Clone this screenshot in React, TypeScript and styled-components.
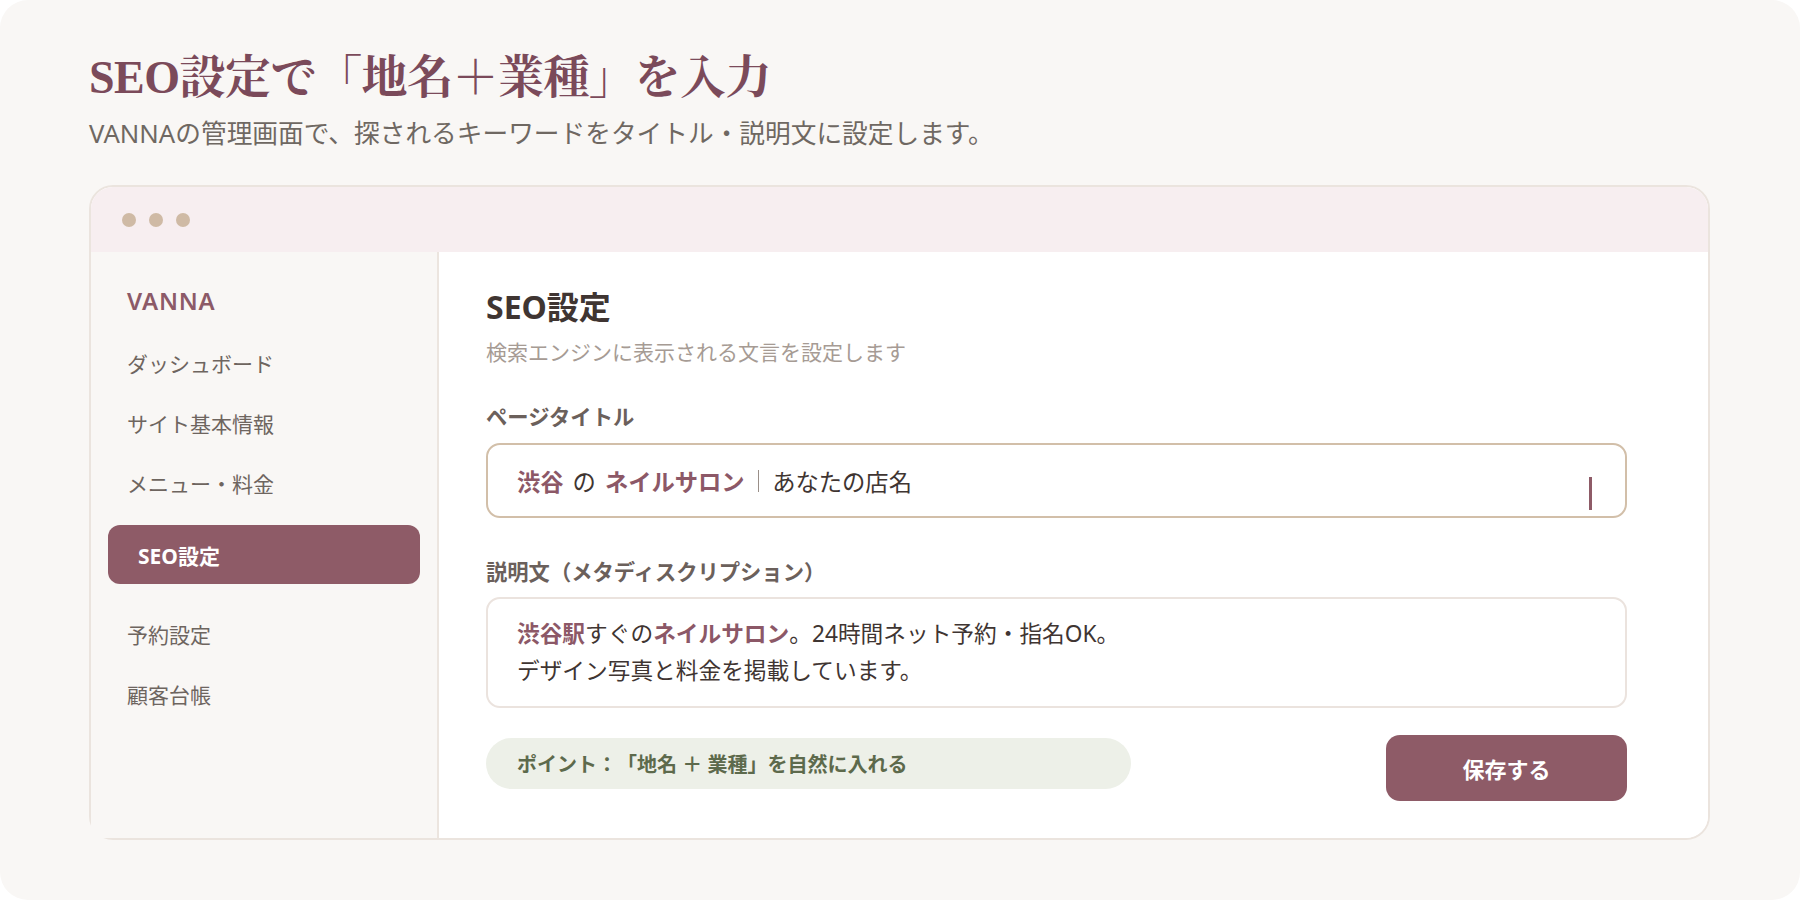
import * as React from 'react';
import styled, {createGlobalStyle} from 'styled-components';

const sans = `"Noto Sans", "Noto Sans CJK JP", sans-serif`;
const accent = '#8e5b67';
const highlight = '#8c5867';

const GlobalStyle = createGlobalStyle`
    html, body {
        margin: 0;
        padding: 0;
        background: #ffffff;
    }
    body {
        font-family: ${sans};
        -webkit-font-smoothing: antialiased;
    }
`;

const Page = styled.div`
    box-sizing: border-box;
    width: 1800px;
    height: 900px;
    background: #f9f7f5;
    border-radius: 28px;
    padding: 50px 90px 0 89px;
    display: flex;
    flex-direction: column;
`;

const Title = styled.h1`
    margin: 0;
    font-family: "Liberation Serif", "Noto Serif CJK JP", "Noto Sans CJK JP", serif;
    font-size: 46px;
    line-height: 56px;
    font-weight: 700;
    color: #7b4a5a;
    letter-spacing: -0.5px;
`;

const Lead = styled.p`
    margin: 10px 0 0;
    font-size: 25.7px;
    line-height: 36px;
    color: #6f6862;
`;

const Window = styled.div`
    box-sizing: border-box;
    margin-top: 33px;
    height: 655px;
    border: 2px solid #ebe4de;
    border-radius: 24px;
    background: #ffffff;
    display: flex;
    flex-direction: column;
`;

const TitleBar = styled.div`
    height: 65px;
    flex: none;
    background: #f7eef0;
    border-radius: 22px 22px 0 0;
    display: flex;
    align-items: center;
    gap: 13px;
    padding-left: 31px;
`;

const Dot = styled.span`
    width: 14px;
    height: 14px;
    border-radius: 50%;
    background: #cfbaa5;
`;

const Body = styled.div`
    flex: 1;
    display: flex;
    min-height: 0;
`;

const Sidebar = styled.nav`
    box-sizing: border-box;
    width: 348px;
    flex: none;
    background: #f9f7f5;
    border-right: 2px solid #ece5df;
    padding: 32px 17px 0;
    display: flex;
    flex-direction: column;
`;

const Brand = styled.div`
    padding-left: 19px;
    font-size: 24px;
    line-height: 34px;
    font-weight: 600;
    letter-spacing: 0.8px;
    color: #8c5a68;
    margin-bottom: 15px;
`;

const NavItem = styled.div<{$active?: boolean}>`
    height: ${p => (p.$active ? '59px' : '60px')};
    display: flex;
    align-items: center;
    padding-left: ${p => (p.$active ? '30px' : '19px')};
    margin: ${p => (p.$active ? '12px 0 20px' : '0')};
    border-radius: 12px;
    font-size: 21px;
    font-weight: ${p => (p.$active ? 700 : 400)};
    color: ${p => (p.$active ? '#ffffff' : '#6e655f')};
    background: ${p => (p.$active ? accent : 'transparent')};
`;

const Main = styled.main`
    flex: 1;
    background: #ffffff;
    border-bottom-right-radius: 22px;
    padding: 35px 81px 0 47px;
    display: flex;
    flex-direction: column;
`;

const Heading = styled.h2`
    margin: 0;
    font-size: 32px;
    line-height: 40px;
    font-weight: 700;
    color: #3f3532;
`;

const SubHeading = styled.p`
    margin: 10px 0 0;
    font-size: 21px;
    line-height: 30px;
    color: #a69b94;
`;

const Label = styled.div<{$gap: number}>`
    margin-top: ${p => p.$gap}px;
    font-size: 21.3px;
    line-height: 30px;
    font-weight: 700;
    color: #6b605b;
`;

const TitleInput = styled.div`
    position: relative;
    box-sizing: border-box;
    margin-top: 11px;
    height: 75px;
    border: 2.5px solid #d2bfa9;
    border-radius: 14px;
    padding: 0 29px;
    display: flex;
    align-items: center;
    font-size: 23.3px;
    color: #3f3532;
`;

const Keyword = styled.span`
    font-weight: 700;
    color: ${highlight};
`;

const Particle = styled.span`
    margin: 0 9px;
`;

const Divider = styled.span`
    display: inline-block;
    width: 1.5px;
    height: 22px;
    margin: 0 13px;
    background: #9a8f88;
`;

const Caret = styled.span`
    position: absolute;
    right: 33px;
    top: 32px;
    width: 3px;
    height: 33px;
    background: ${accent};
`;

const DescInput = styled.div`
    box-sizing: border-box;
    margin-top: 10px;
    height: 111px;
    border: 2px solid #ebe3de;
    border-radius: 14px;
    padding: 16px 29px;
    font-size: 22.7px;
    line-height: 37px;
    color: #3f3532;
`;

const Footer = styled.div`
    margin-top: 27px;
    display: flex;
    justify-content: space-between;
    align-items: flex-start;
`;

const Tip = styled.div`
    box-sizing: border-box;
    margin-top: 3px;
    width: 645px;
    height: 51px;
    border-radius: 26px;
    background: #edf0e8;
    padding-left: 31px;
    display: flex;
    align-items: center;
    font-size: 20px;
    font-weight: 700;
    color: #5d6a4c;
    text-spacing-trim: space-all;
`;

const SaveButton = styled.button`
    width: 241px;
    height: 66px;
    border: none;
    border-radius: 14px;
    background: ${accent};
    color: #ffffff;
    font-family: ${sans};
    font-size: 22px;
    font-weight: 700;
    cursor: pointer;
`;

const navItems = ['ダッシュボード', 'サイト基本情報', 'メニュー・料金', 'SEO設定', '予約設定', '顧客台帳'];

export default function App() {
    return (
        <>
            <GlobalStyle />
            <Page>
                <Title>SEO設定で「地名＋業種」を入力</Title>
                <Lead>VANNAの管理画面で、探されるキーワードをタイトル・説明文に設定します。</Lead>
                <Window>
                    <TitleBar>
                        <Dot />
                        <Dot />
                        <Dot />
                    </TitleBar>
                    <Body>
                        <Sidebar>
                            <Brand>VANNA</Brand>
                            {navItems.map(item => (
                                <NavItem key={item} $active={item === 'SEO設定'}>
                                    {item}
                                </NavItem>
                            ))}
                        </Sidebar>
                        <Main>
                            <Heading>SEO設定</Heading>
                            <SubHeading>検索エンジンに表示される文言を設定します</SubHeading>

                            <Label $gap={35}>ページタイトル</Label>
                            <TitleInput>
                                <Keyword>渋谷</Keyword>
                                <Particle>の</Particle>
                                <Keyword>ネイルサロン</Keyword>
                                <Divider />
                                あなたの店名
                                <Caret />
                            </TitleInput>

                            <Label $gap={39}>説明文（メタディスクリプション）</Label>
                            <DescInput>
                                <Keyword>渋谷駅</Keyword>すぐの<Keyword>ネイルサロン</Keyword>。24時間ネット予約・指名OK。
                                <br />
                                デザイン写真と料金を掲載しています。
                            </DescInput>

                            <Footer>
                                <Tip>ポイント：「地名 ＋ 業種」を自然に入れる</Tip>
                                <SaveButton>保存する</SaveButton>
                            </Footer>
                        </Main>
                    </Body>
                </Window>
            </Page>
        </>
    );
}
